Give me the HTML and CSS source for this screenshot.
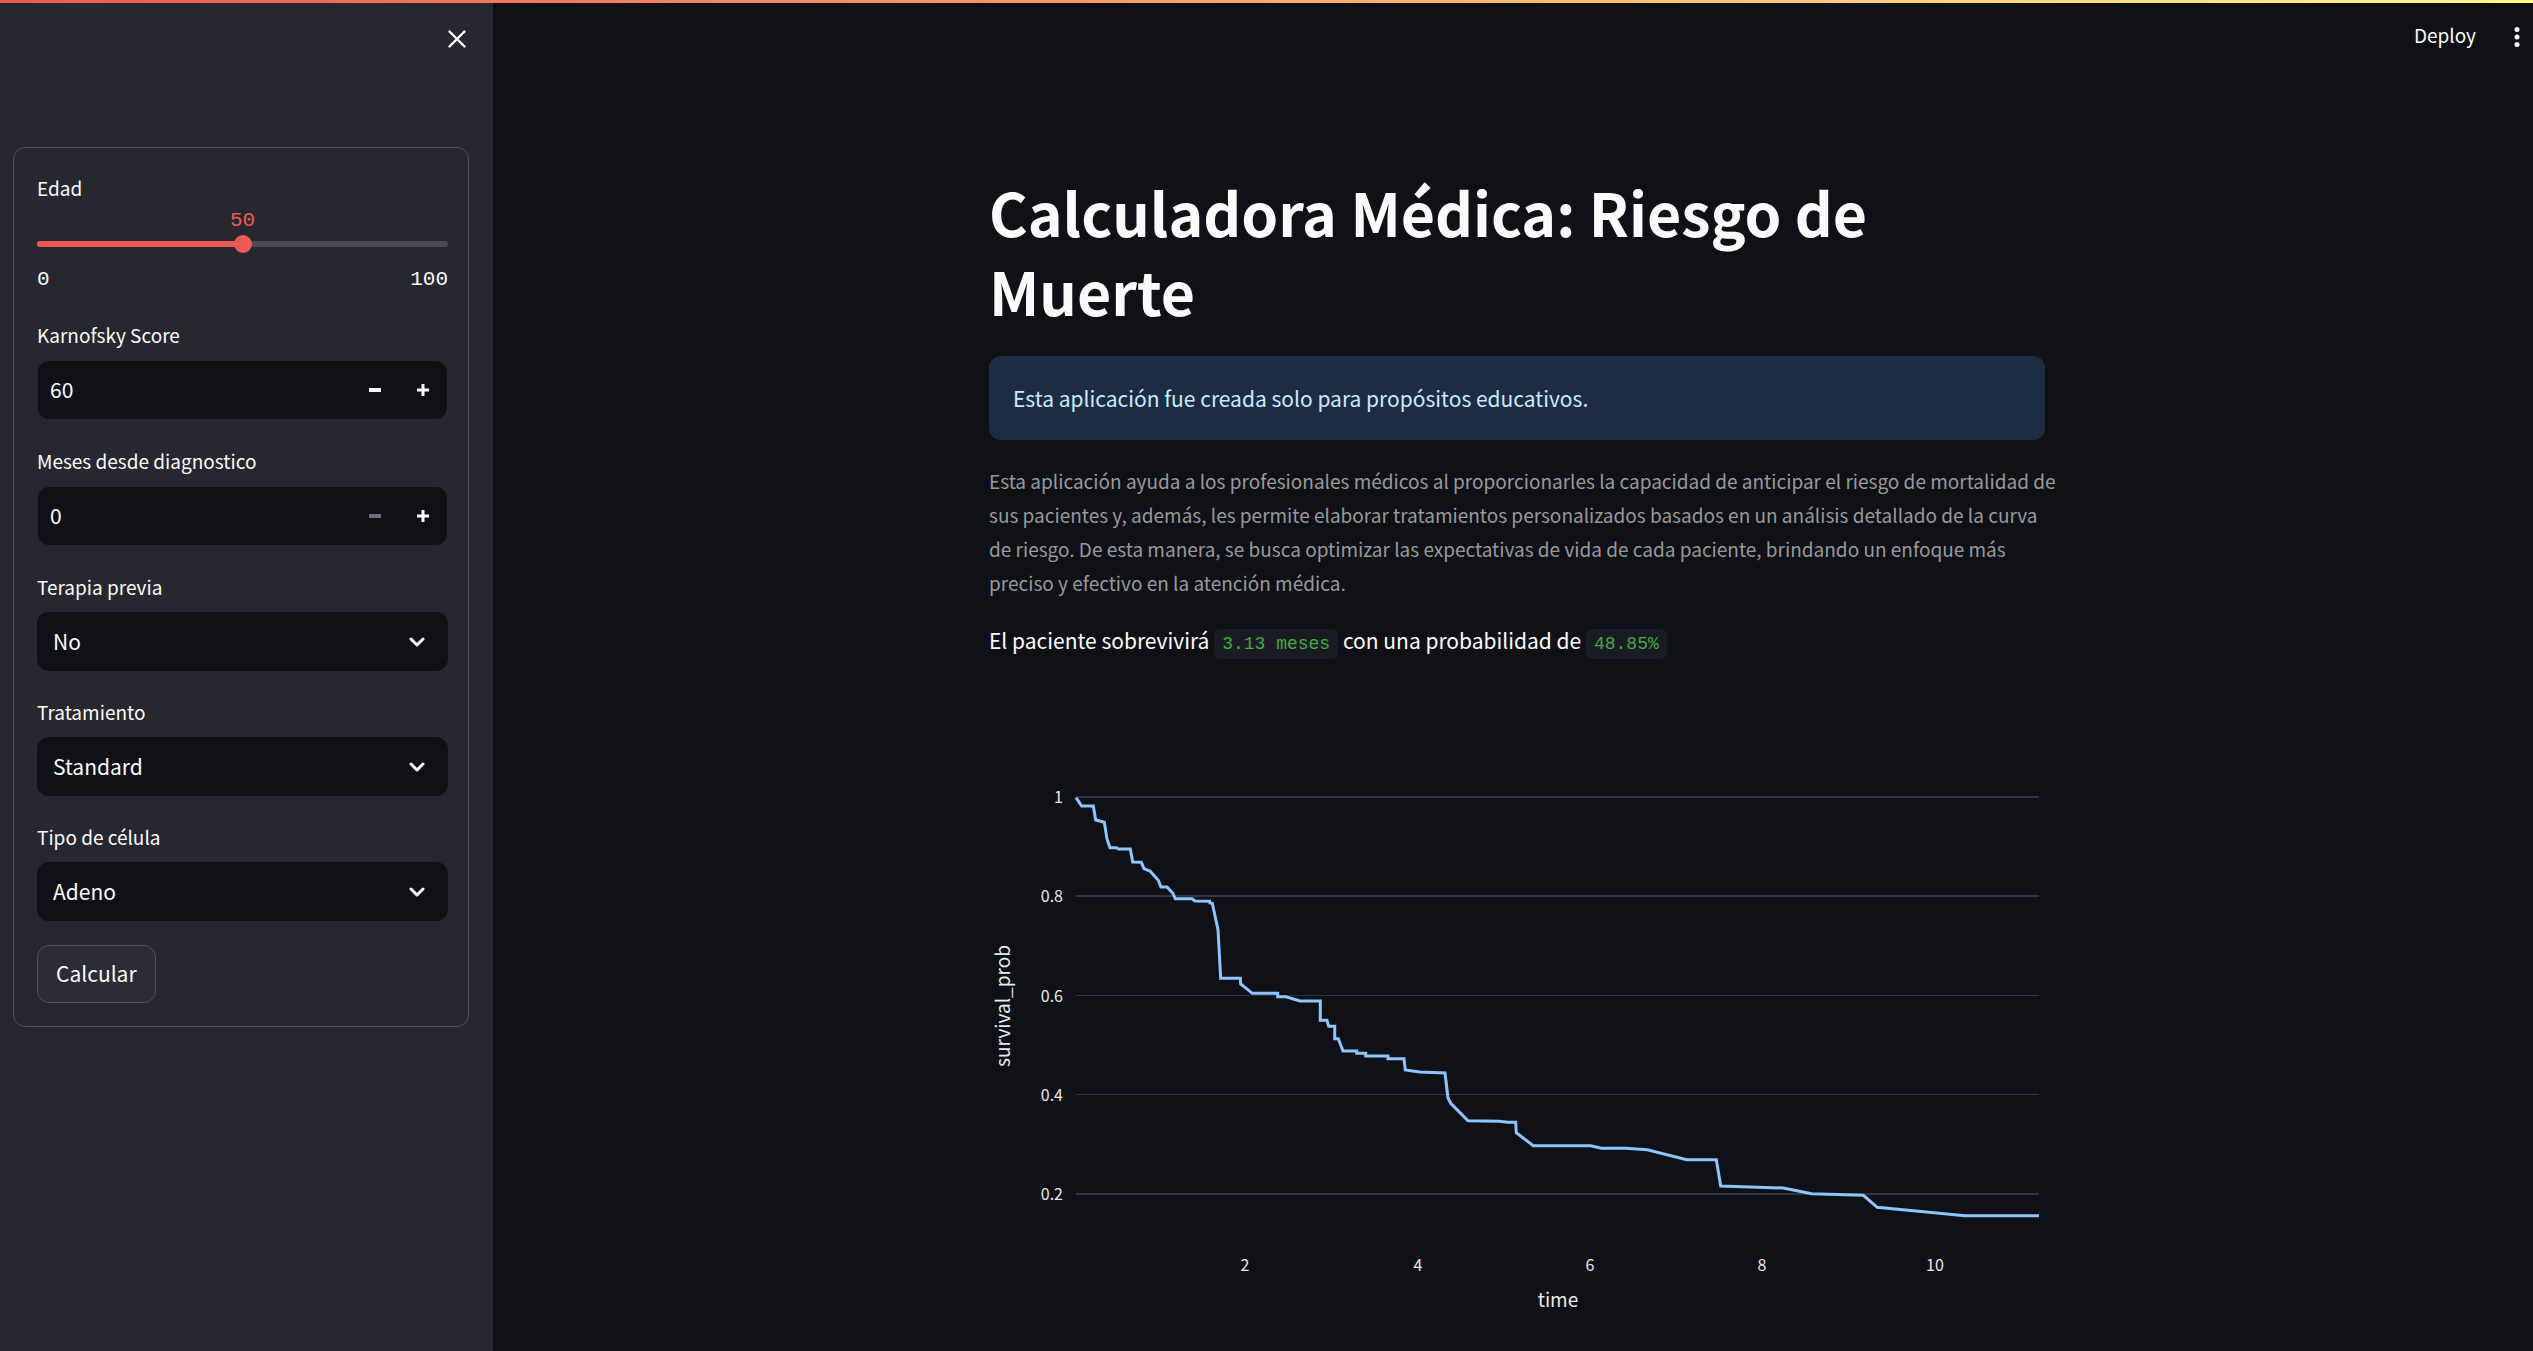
FILE: index.html
```html
<!DOCTYPE html>
<html lang="es">
<head>
<meta charset="utf-8">
<meta name="viewport" content="width=device-width, initial-scale=1">
<title>Calculadora Médica</title>
<link rel="stylesheet" href="styles.css">
</head>
<body>
<div class="decoration"></div>
<div class="app">
  <aside class="sidebar">
    <div class="sidebar-top">
      <button class="icon-button" type="button" aria-label="Cerrar">
        <svg width="18" height="18" viewBox="0 0 18 18" fill="none" stroke="currentColor" stroke-width="2.400" stroke-linecap="round"><path d="M1.500 1.500 16.500 16.500M16.500 1.500 1.500 16.500"/></svg>
      </button>
    </div>
    <form class="form">
      <div class="field">
        <label class="label" for="edad">Edad</label>
        <div class="slider">
          <output class="slider-value" for="edad">50</output>
          <input class="range" id="edad" type="range" min="0" max="100" value="50">
          <div class="slider-ticks"><span>0</span><span>100</span></div>
        </div>
      </div>
      <div class="field">
        <label class="label" for="karnofsky">Karnofsky Score</label>
        <div class="number">
          <input class="number-input" id="karnofsky" type="number" value="60">
          <button class="step" type="button" aria-label="Disminuir"><svg width="12" height="12" viewBox="0 0 12 12" fill="currentColor"><path d="M0 4h12v4H0z"/></svg></button>
          <button class="step" type="button" aria-label="Aumentar"><svg width="12" height="12" viewBox="0 0 12 12" fill="currentColor"><path d="M0 4.500h4.500V0h3v4.500H12v3H7.500V12h-3V7.500H0z"/></svg></button>
        </div>
      </div>
      <div class="field">
        <label class="label" for="meses">Meses desde diagnostico</label>
        <div class="number">
          <input class="number-input" id="meses" type="number" min="0" value="0">
          <button class="step" type="button" aria-label="Disminuir" disabled><svg width="12" height="12" viewBox="0 0 12 12" fill="currentColor"><path d="M0 4h12v4H0z"/></svg></button>
          <button class="step" type="button" aria-label="Aumentar"><svg width="12" height="12" viewBox="0 0 12 12" fill="currentColor"><path d="M0 4.500h4.500V0h3v4.500H12v3H7.500V12h-3V7.500H0z"/></svg></button>
        </div>
      </div>
      <div class="field">
        <label class="label" for="terapia">Terapia previa</label>
        <div class="select">
          <select class="select-input" id="terapia"><option>No</option></select>
          <svg class="chevron" width="16" height="10" viewBox="0 0 16 10" fill="none" stroke="currentColor" stroke-width="3" stroke-linecap="round" stroke-linejoin="round"><path d="M2 2l6 6 6-6"/></svg>
        </div>
      </div>
      <div class="field">
        <label class="label" for="tratamiento">Tratamiento</label>
        <div class="select">
          <select class="select-input" id="tratamiento"><option>Standard</option></select>
          <svg class="chevron" width="16" height="10" viewBox="0 0 16 10" fill="none" stroke="currentColor" stroke-width="3" stroke-linecap="round" stroke-linejoin="round"><path d="M2 2l6 6 6-6"/></svg>
        </div>
      </div>
      <div class="field">
        <label class="label" for="celula">Tipo de célula</label>
        <div class="select">
          <select class="select-input" id="celula"><option>Adeno</option></select>
          <svg class="chevron" width="16" height="10" viewBox="0 0 16 10" fill="none" stroke="currentColor" stroke-width="3" stroke-linecap="round" stroke-linejoin="round"><path d="M2 2l6 6 6-6"/></svg>
        </div>
      </div>
      <button class="submit" type="button">Calcular</button>
    </form>
  </aside>

  <main class="main">
    <header class="toolbar">
      <button class="deploy" type="button">Deploy</button>
      <button class="icon-button" type="button" aria-label="Menú">
        <svg width="6" height="20" viewBox="0 0 6 20" fill="currentColor"><circle cx="3" cy="2.500" r="2.500"/><circle cx="3" cy="10" r="2.500"/><circle cx="3" cy="17.500" r="2.500"/></svg>
      </button>
    </header>
    <div class="content">
      <h1 class="title">Calculadora Médica: Riesgo de Muerte</h1>
      <div class="alert">Esta aplicación fue creada solo para propósitos educativos.</div>
      <p class="caption">Esta aplicación ayuda a los profesionales médicos al proporcionarles la capacidad de anticipar el riesgo de mortalidad de sus pacientes y, además, les permite elaborar tratamientos personalizados basados en un análisis detallado de la curva de riesgo. De esta manera, se busca optimizar las expectativas de vida de cada paciente, brindando un enfoque más preciso y efectivo en la atención médica.</p>
      <p class="result">El paciente sobrevivirá <code class="code">3.13 meses</code> con una probabilidad de <code class="code">48.85%</code></p>
      <svg class="chart" viewBox="0 0 1056 640" role="img" aria-label="survival_prob / time">
        <g class="grid">
          <path d="M87 98H1050M87 197H1050M87 495H1050" stroke-width="2"/>
          <path d="M87 296.500H1050M87 395.500H1050" stroke-width="1"/>
        </g>
        <polyline class="curve" points="87,98.7 92.700,107 104.300,107 106.700,121 115.300,123.300 118,140 121,148.700 127.300,148.700 129.700,150 141.300,150 143.700,163 152.300,163.300 155,169.700 161,172 169.300,181.300 172,188 178,188 183.700,194 186.300,199.700 203,199.700 206,202 220.700,202.300 221,204 223.300,204.300 229,230.700 231.700,279.300 251.300,279.300 251.700,285 263.300,294.300 288.700,294.300 288.700,297.700 297,297.700 311,302 331.300,302 331.300,321.300 338,321.300 339.700,327.300 345.700,327.300 345.700,339.700 349.300,339.700 354,352 367.700,352 367.700,354.300 376.700,354.300 376.700,357 399,357 399,359.700 415,359.700 416.300,371 430.700,373 456,374 459,399 461.700,404.300 479,421.700 510.300,422.300 518.700,423.300 526.700,423.300 527.300,433.700 544.300,446.700 601.700,446.700 612.300,449.300 636.700,449.300 658.300,450.700 697.700,460.700 727.300,460.700 731.700,487 794.300,489 822.700,494.700 874.300,496.300 888.300,508.300 976,516.700 1050,516.700"/>
        <g class="tick tick-y">
          <text x="74" y="104">1</text>
          <text x="74" y="203">0.8</text>
          <text x="74" y="303">0.6</text>
          <text x="74" y="402">0.4</text>
          <text x="74" y="501">0.2</text>
        </g>
        <g class="tick tick-x">
          <text x="256" y="572">2</text>
          <text x="429" y="572">4</text>
          <text x="601" y="572">6</text>
          <text x="773" y="572">8</text>
          <text x="946" y="572">10</text>
        </g>
        <text class="axis-title" x="569" y="608">time</text>
        <text class="axis-title" transform="translate(21 307) rotate(-90)">survival_prob</text>
      </svg>
    </div>
  </main>
</div>
</body>
</html>
```
FILE: styles.css
```css
* { box-sizing: border-box; }

body {
  margin: 0;
  background: #101116;
  color: #fafafa;
  font-family: "Noto Sans CJK SC", "Noto Sans", sans-serif;
  font-size: 21px;
  line-height: 36px;
}

button, input, select { font: inherit; color: inherit; }

button {
  padding: 0;
  border: 0;
  background: none;
  cursor: pointer;
}

button:disabled { color: #6d6f7b; cursor: default; }

svg { display: block; }

.decoration {
  height: 3px;
  background: linear-gradient(90deg, #ee5a52, #fff98a);
}

.app {
  display: flex;
  min-height: calc(100vh - 3px);
}

.sidebar {
  flex: 0 0 493px;
  padding: 0 24px 48px 13px;
  background: #27272f;
}

.sidebar-top {
  display: flex;
  justify-content: flex-end;
  height: 144px;
  padding: 27px 3px 0 0;
}

.icon-button { height: 18px; }

.form {
  display: flex;
  flex-direction: column;
  gap: 24px;
  padding: 23px 20px 23px 23px;
  border: 1px solid #505159;
  border-radius: 12px;
}

.label {
  display: block;
  height: 42px;
  font-size: 19px;
  line-height: 34px;
}

.slider {
  height: 81px;
  font-family: "Liberation Mono", monospace;
  font-size: 21px;
  line-height: 24px;
}

.slider-value {
  display: block;
  height: 22px;
  line-height: 16px;
  color: #ee5a52;
  text-align: center;
}

.range {
  display: block;
  width: 100%;
  height: 18px;
  margin: 0;
  appearance: none;
  background: none;
}

.range::-webkit-slider-runnable-track {
  height: 6px;
  border-radius: 3px;
  background: linear-gradient(90deg, #ee5a52 50%, #494b54 50%);
}

.range::-webkit-slider-thumb {
  appearance: none;
  width: 18px;
  height: 18px;
  margin-top: -6px;
  border-radius: 50%;
  background: #ee5a52;
}

.slider-ticks {
  display: flex;
  justify-content: space-between;
  padding-top: 15px;
}

.number {
  display: flex;
  align-items: center;
  height: 60px;
  border: 1px solid #27272f;
  border-radius: 12px;
  background: #101116;
  overflow: hidden;
}

.number-input {
  flex: 1;
  min-width: 0;
  height: 100%;
  padding: 0 12px 2px;
  border: 0;
  background: none;
  appearance: textfield;
}

.number-input::-webkit-inner-spin-button { display: none; }

.step {
  display: flex;
  flex: 0 0 48px;
  justify-content: center;
  align-items: center;
  height: 100%;
}

.select { position: relative; }

.select-input {
  display: block;
  width: 100%;
  height: 59px;
  padding: 0 48px 2px 16px;
  border: 0;
  border-radius: 12px;
  background: #101116;
  appearance: none;
}

.chevron {
  position: absolute;
  top: 25px;
  right: 23px;
  pointer-events: none;
}

.submit {
  align-self: flex-start;
  height: 58px;
  padding: 0 18px 2px;
  border: 1px solid #505159;
  border-radius: 12px;
  background: #2b2c36;
}

.main {
  display: flex;
  flex: 1;
  flex-direction: column;
  min-width: 0;
}

.toolbar {
  display: flex;
  justify-content: flex-end;
  align-items: center;
  gap: 38px;
  height: 66px;
  padding: 0 13px;
}

.deploy {
  padding-bottom: 2px;
  font-size: 19px;
}

.content {
  width: 100%;
  max-width: 1104px;
  margin: 0 auto;
  padding: 103px 20px 0 28px;
}

.title {
  margin: 0;
  padding-bottom: 26px;
  font-size: 59px;
  font-weight: 700;
  line-height: 79px;
}

.alert {
  padding: 24px;
  border-radius: 12px;
  background: #1e2c43;
  color: #c7ebff;
}

/* Text runs slightly past the column edge */
.caption {
  margin: 24px -14px 0 0;
  color: #98999b;
  font-size: 19px;
  line-height: 34px;
}

.result {
  margin: 21px 0 0;
  line-height: 38px;
}

.code {
  padding: 5px 8px;
  border-radius: 6px;
  background: #1a1c24;
  color: #45a843;
  font-family: "Liberation Mono", monospace;
  font-size: 18px;
}

.chart {
  width: 100%;
  height: auto;
  margin-top: 36px;
}

.grid { stroke: #31333f; }

.curve {
  fill: none;
  stroke: #8ec5ff;
  stroke-width: 3;
}

.tick { fill: #e6eaf1; font-size: 16px; }
.tick-y { text-anchor: end; }
.tick-x { text-anchor: middle; }

.axis-title {
  fill: #e6eaf1;
  font-size: 19px;
  text-anchor: middle;
}
```
